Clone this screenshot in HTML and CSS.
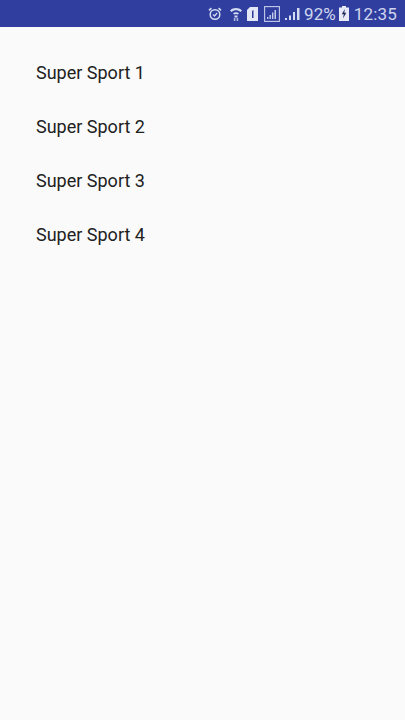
FILE: index.html
```html
<!DOCTYPE html>
<html lang="en">
<head>
<meta charset="utf-8">
<title>Super Sport</title>
<link rel="stylesheet" href="styles.css">
</head>
<body>
<header class="status-bar">
  <svg class="icon icon-alarm" viewBox="0 0 14 14" width="14" height="14"><circle cx="7" cy="7.500" r="4.800" fill="none" stroke="#d5dcf2" stroke-width="1.500"/><path d="M5 7.500l1.500 1.500 2.600-3" fill="none" stroke="#d5dcf2" stroke-width="1.200"/><path d="M1 3.400L3.400 1.200M13 3.400L10.600 1.200" stroke="#d5dcf2" stroke-width="1.600"/></svg>
  <svg class="icon icon-wifi" viewBox="0 0 14 16" width="14" height="16"><path d="M1 4.500C4.500 1.300 9.500 1.300 13 4.500L11.500 6C8.800 3.700 5.200 3.700 2.500 6Z" fill="#d5dcf2"/><path d="M4 7.200C5.800 5.800 8.200 5.800 10 7.200L8.800 8.600C7.700 7.800 6.300 7.800 5.200 8.600Z" fill="#d5dcf2"/><rect x="5.500" y="9.500" width="3" height="2" fill="#d5dcf2"/><path d="M4.800 12h1.600v3H4.800zM7.600 12h1.600v3H7.600z" fill="#aab4de"/></svg>
  <svg class="icon icon-sim" viewBox="0 0 11 14" width="11" height="14"><path d="M0 3l3-3h8v14H0z" fill="#e4e8f6"/><path d="M5 4l1.500-1v8H5z" fill="#2d3a96"/></svg>
  <svg class="icon icon-signal-box" viewBox="0 0 16 16" width="16" height="16"><rect x=".6" y=".6" width="14.800" height="14.800" fill="none" stroke="#c3cbea" stroke-width="1.100"/><path d="M3 13h1.400v-2H3zM5.500 13h1.400V9H5.500zM8 13h1.400V6.500H8zM10.500 13H12V4h-1.500z" fill="#c3cbea"/></svg>
  <svg class="icon icon-signal" viewBox="0 0 15 13" width="15" height="13"><path d="M0 13h2v-2H0zM4 13h2V8.500H4zM8 13h2V5H8zM12 13h2.500V1H12z" fill="#d5dcf2"/></svg>
  <span class="battery-text">92%</span>
  <svg class="icon icon-battery" viewBox="0 0 10 15" width="10" height="15"><path d="M3 0h4v1.500h3V15H0V1.500h3z" fill="#e8ebf7"/><path d="M5.800 3L2.800 8.300h2L4 12.500 7.300 6.800h-2z" fill="#222a5e"/></svg>
  <span class="clock">12:35</span>
</header>
<ul class="list">
  <li class="item">Super Sport 1</li>
  <li class="item">Super Sport 2</li>
  <li class="item">Super Sport 3</li>
  <li class="item">Super Sport 4</li>
</ul>
</body>
</html>
```
FILE: styles.css
```css
html, body {
  margin: 0;
  padding: 0;
}
body {
  width: 405px;
  height: 720px;
  overflow: hidden;
  background: #fafafa;
  font-family: Roboto, "Liberation Sans", sans-serif;
}
.status-bar {
  height: 27px;
  box-sizing: border-box;
  background: #303f9f;
  display: flex;
  align-items: center;
  justify-content: flex-end;
  padding-right: 8px;
  color: #cfd6ee;
  font-size: 17px;
}
.icon {
  display: block;
  flex: none;
}
.icon-alarm { margin-right: 7px; }
.icon-wifi { margin-right: 4px; }
.icon-sim { margin-right: 6px; }
.icon-signal-box { margin-right: 5px; }
.icon-signal { margin-right: 4px; }
.battery-text { margin-right: 3px; }
.icon-battery { margin-right: 5px; }
.clock { letter-spacing: 0.2px; }
.list {
  list-style: none;
  margin: 0;
  padding: 19px 0 0 36px;
}
.item {
  height: 54px;
  line-height: 54px;
  font-size: 18px;
  color: #212121;
}
```
